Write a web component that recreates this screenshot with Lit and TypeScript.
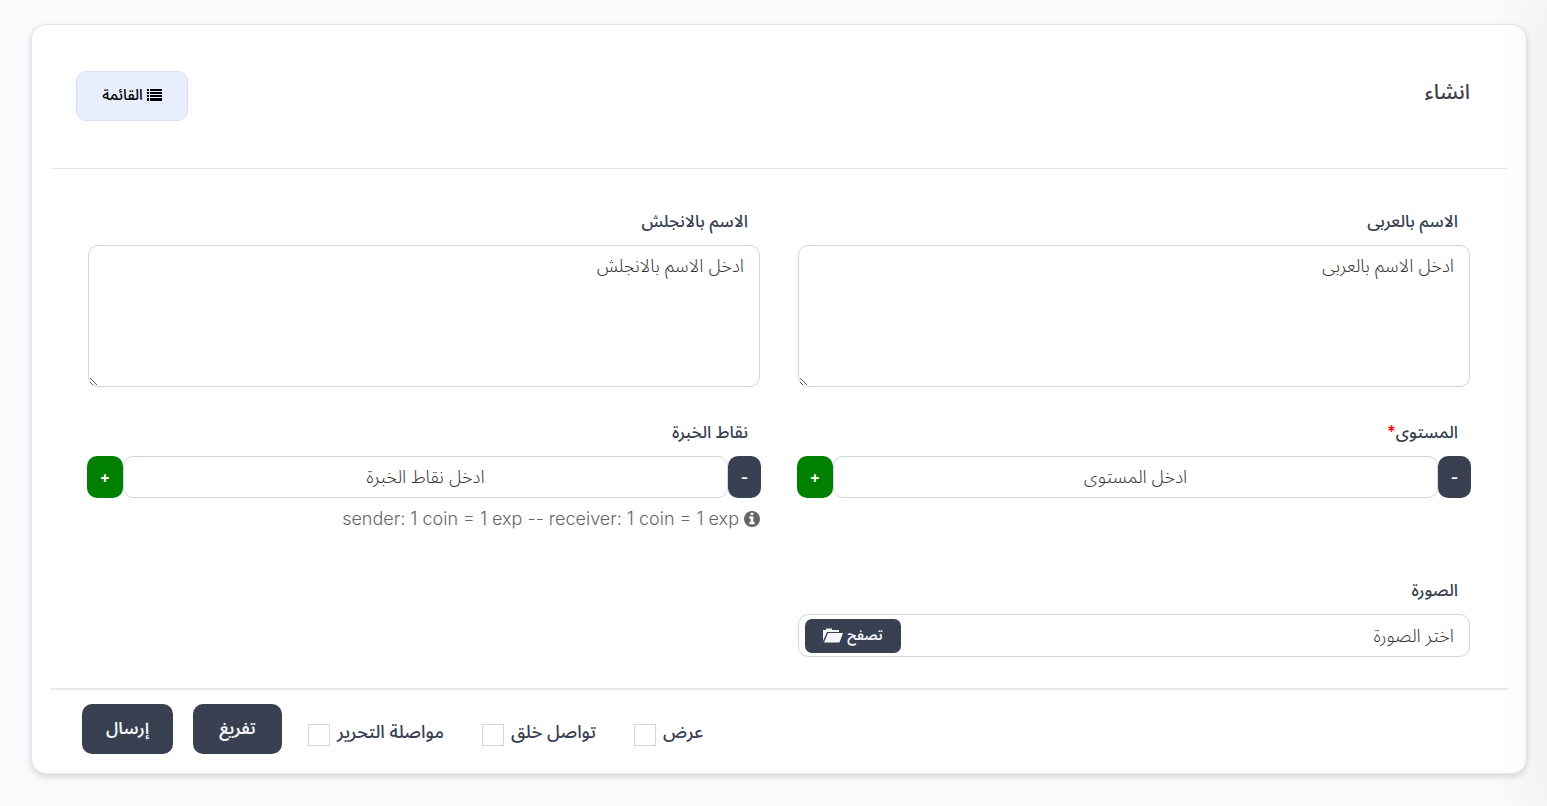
import { LitElement, html, css, svg } from "lit";
import { customElement, property } from "lit/decorators.js";

const listIcon = svg`<svg class="icon list" viewBox="0 0 15 12" aria-hidden="true"><path d="M0 0h2v2H0zM3 0h12v2H3zM0 3h2v2H0zM3 3h12v2H3zM0 6h2v2H0zM3 6h12v2H3zM0 9h2v3H0zM3 9h12v3H3z"/></svg>`;

const folderIcon = svg`<svg class="icon folder" viewBox="0 0 20 15" aria-hidden="true"><path d="M0 13V2h3V.5h6V2h7v2H4zM5 5h15l-3.500 9.500H1z"/></svg>`;

const infoIcon = svg`<svg class="icon info" viewBox="0 0 1536 1536" aria-hidden="true"><path d="M1024 1248v-160q0-14-9-23t-23-9h-96V544q0-14-9-23t-23-9H544q-14 0-23 9t-9 23v160q0 14 9 23t23 9h96v320h-96q-14 0-23 9t-9 23v160q0 14 9 23t23 9h448q14 0 23-9t9-23zM896 352V192q0-14-9-23t-23-9H672q-14 0-23 9t-9 23v160q0 14 9 23t23 9h192q14 0 23-9t9-23zm640 416q0 209-103 385.500T1153.500 1433 768 1536t-385.500-103T103 1153.500 0 768t103-385.500T382.500 103 768 0t385.500 103T1433 382.500 1536 768z"/></svg>`;

const base = css`
  :host {
    display: block;
    box-sizing: border-box;
    font-family: Inter, "Segoe UI", "Noto Sans Arabic", "DejaVu Sans", sans-serif;
    font-size: 17px;
    line-height: 24px;
    color: #384051;
  }
  * {
    box-sizing: border-box;
  }
  button,
  input,
  textarea {
    font-family: inherit;
    margin: 0;
  }
  label {
    display: block;
    font-weight: 500;
    padding-inline-start: 12px;
    margin-bottom: 12px;
  }
  input[type="text"],
  textarea {
    display: block;
    width: 100%;
    border: 1px solid #d3d5e0;
    border-radius: 10px;
    background: #fff;
    color: #444;
    font-size: 18px;
    line-height: 24px;
    outline: none;
  }
  ::placeholder {
    color: #333;
    opacity: 1;
    font-weight: 300;
  }
  .icon {
    fill: currentColor;
    flex: none;
  }
`;

@customElement("text-area-field")
class TextAreaField extends LitElement {
  @property() label = "";
  @property() hint = "";

  static styles = [
    base,
    css`
      textarea {
        height: 142px;
        padding: 8px 15px;
        resize: both;
      }
    `,
  ];

  render() {
    return html`
      <label for="text">${this.label}</label>
      <textarea id="text" placeholder=${this.hint}></textarea>
    `;
  }
}

@customElement("stepper-field")
class StepperField extends LitElement {
  @property() label = "";
  @property() hint = "";
  @property({ type: Boolean }) required = false;

  static styles = [
    base,
    css`
      .star {
        color: #f00;
      }
      .row {
        display: flex;
        height: 42px;
        margin: 0 -1px;
      }
      .row input {
        flex: 1;
        min-width: 0;
        text-align: center;
      }
      button {
        flex: none;
        border: 0;
        border-radius: 10px;
        padding: 0;
        color: #fff;
        font-size: 16px;
        font-weight: 600;
        cursor: pointer;
      }
      .minus {
        width: 33px;
        background: #384051;
      }
      .plus {
        width: 36px;
        background: #008000;
      }
    `,
  ];

  private step(by: number) {
    const input = this.renderRoot.querySelector("input")!;
    input.value = String((Number(input.value) || 0) + by);
  }

  render() {
    return html`
      <label for="amount"
        >${this.label}${this.required ? html`<span class="star">*</span>` : ""}</label
      >
      <div class="row">
        <button class="minus" type="button" @click=${() => this.step(-1)}>-</button>
        <input id="amount" type="text" inputmode="numeric" placeholder=${this.hint} />
        <button class="plus" type="button" @click=${() => this.step(1)}>+</button>
      </div>
    `;
  }
}

@customElement("file-field")
class FileField extends LitElement {
  @property() label = "";
  @property() hint = "";

  static styles = [
    base,
    css`
      .box {
        display: flex;
        align-items: center;
        height: 43px;
        padding: 4px 6px;
        border: 1px solid #d3d5e0;
        border-radius: 10px;
      }
      .box input {
        flex: 1;
        min-width: 0;
        border: 0;
        padding: 0 9px;
      }
      button {
        display: flex;
        align-items: center;
        justify-content: center;
        gap: 4px;
        width: 96px;
        height: 34px;
        padding: 0;
        border: 0;
        border-radius: 7px;
        background: #384051;
        color: #f3f5f8;
        font-size: 14px;
        font-weight: 600;
        cursor: pointer;
      }
      .folder {
        width: 20px;
        height: 15px;
      }
    `,
  ];

  render() {
    return html`
      <label for="path">${this.label}</label>
      <div class="box">
        <input id="path" type="text" readonly placeholder=${this.hint} />
        <button type="button">تصفح ${folderIcon}</button>
      </div>
    `;
  }
}

@customElement("app-root")
class AppRoot extends LitElement {
  static styles = [
    base,
    css`
      :host {
        position: relative;
        min-height: 100vh;
        padding: 24px 20px 32px 31px;
        overflow: hidden;
        background: #f9fafc;
      }
      .drawer {
        position: absolute;
        inset: 0 -20px 0 auto;
        width: 20px;
        box-shadow: 0 0 50px 10px rgba(0, 0, 0, 0.06);
        pointer-events: none;
      }
      .card {
        padding: 0 18px 0 19px;
        border: 1px solid #e3e5e9;
        border-radius: 15px;
        background: #fff;
        box-shadow: 0 3px 6px rgba(0, 0, 0, 0.14);
      }
      header {
        display: flex;
        justify-content: space-between;
        align-items: flex-start;
        padding: 46px 38px 47px 25px;
        border-bottom: 1px solid #e6e7e9;
      }
      h1 {
        margin: 6px 0 0;
        font-size: 21px;
        line-height: 30px;
        font-weight: 500;
        color: #3f4047;
      }
      .list-link {
        display: flex;
        align-items: center;
        justify-content: center;
        gap: 4px;
        width: 112px;
        height: 50px;
        padding-bottom: 2px;
        border: 1px solid #d5dffa;
        border-radius: 10px;
        background: #e8eefd;
        color: #000;
        font-size: 15px;
        font-weight: 500;
        text-decoration: none;
      }
      .list {
        width: 15px;
        height: 12px;
      }
      .fields {
        display: grid;
        grid-template-columns: 1fr 1fr;
        column-gap: 38px;
        row-gap: 33px;
        padding: 40px 38px 31px 37px;
      }
      .note {
        display: flex;
        align-items: center;
        gap: 5px;
        margin: 9px 0 14px;
        font-size: 18px;
        font-weight: 300;
        line-height: 24px;
        color: #666;
      }
      .info {
        width: 16px;
        height: 16px;
      }
      footer {
        display: flex;
        justify-content: flex-end;
        align-items: center;
        padding: 14px 0 19px 31px;
        border-top: 2px solid #e8e8e9;
      }
      .check {
        display: flex;
        align-items: center;
        gap: 7px;
        margin: 6px 0 0 38px;
        padding: 0;
        font-size: 18px;
      }
      .check.last {
        margin-left: 26px;
      }
      .check input {
        appearance: none;
        width: 22px;
        height: 22px;
        margin-top: 6px;
        border: 1px solid #d6d6d8;
        background: #fff;
      }
      .check input:checked {
        background: #384051;
      }
      .action {
        height: 50px;
        padding: 0;
        border: 0;
        border-radius: 10px;
        background: #384051;
        color: #f3f5f8;
        font-size: 17px;
        font-weight: 600;
        cursor: pointer;
      }
      .reset {
        width: 89px;
        margin-left: 20px;
      }
      .submit {
        width: 91px;
      }
    `,
  ];

  render() {
    return html`
      <form class="card" dir="rtl" @submit=${(e: Event) => e.preventDefault()}>
        <header>
          <h1>انشاء</h1>
          <a class="list-link" href="#list">${listIcon} القائمة</a>
        </header>
        <div class="fields">
          <text-area-field label="الاسم بالعربى" hint="ادخل الاسم بالعربى"></text-area-field>
          <text-area-field label="الاسم بالانجلش" hint="ادخل الاسم بالانجلش"></text-area-field>
          <stepper-field label="المستوى" hint="ادخل المستوى" required></stepper-field>
          <div>
            <stepper-field label="نقاط الخبرة" hint="ادخل نقاط الخبرة"></stepper-field>
            <div class="note">
              ${infoIcon}<span dir="ltr">sender: 1 coin = 1 exp -- receiver: 1 coin = 1 exp</span>
            </div>
          </div>
          <file-field label="الصورة" hint="اختر الصورة"></file-field>
        </div>
        <footer>
          <label class="check">عرض <input type="checkbox" /></label>
          <label class="check">تواصل خلق <input type="checkbox" /></label>
          <label class="check last">مواصلة التحرير <input type="checkbox" /></label>
          <button class="action reset" type="reset">تفريغ</button>
          <button class="action submit" type="submit">إرسال</button>
        </footer>
      </form>
      <div class="drawer"></div>
    `;
  }
}
